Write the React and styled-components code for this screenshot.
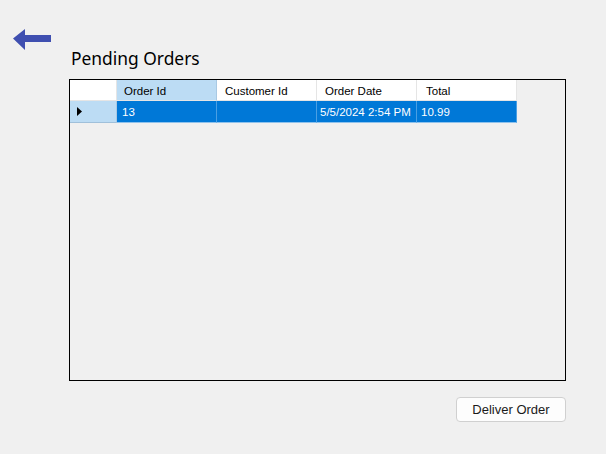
import React from "react";
import styled, { createGlobalStyle } from "styled-components";

const Global = createGlobalStyle`
  html, body { margin: 0; padding: 0; background: #f0f0f0; }
  body { width: 606px; height: 454px; overflow: hidden; font-family: "Liberation Sans", Arial, sans-serif; }
`;

const Page = styled.div`
  width: 606px;
  height: 454px;
  box-sizing: border-box;
  background: #f0f0f0;
  display: flex;
  flex-direction: column;
`;

const BackButton = styled.button`
  margin: 29px 0 0 13px;
  padding: 0;
  width: 38px;
  height: 21px;
  border: none;
  background: transparent;
  display: block;
  cursor: pointer;
  svg { display: block; }
`;

const Content = styled.div`
  margin-left: 69px;
  width: 497px;
  display: flex;
  flex-direction: column;
`;

const Title = styled.h1`
  margin: -4px 0 0 2px;
  height: 33px;
  font-family: "Noto Sans", sans-serif;
  font-weight: 400;
  font-size: 17.4px;
  line-height: 24px;
  color: #000;
`;

const Grid = styled.div`
  box-sizing: border-box;
  width: 497px;
  height: 302px;
  border: 1px solid #000;
  background: #f0f0f0;
  display: flex;
  flex-direction: column;
  font-family: "Liberation Sans", Arial, sans-serif;
  font-size: 11.5px;
`;

const Row = styled.div`
  display: flex;
  height: ${(p) => p.$h}px;
`;

const RowHeader = styled.div`
  box-sizing: border-box;
  width: 47px;
  height: 100%;
  background: ${(p) => (p.$selected ? "#bcdcf4" : "#ffffff")};
  border-right: 1px solid ${(p) => (p.$selected ? "#a9c9e3" : "#e5e5e5")};
  border-bottom: 1px solid ${(p) => (p.$selected ? "#a0c0da" : "#e5e5e5")};
  display: flex;
  align-items: center;
  padding-left: 7px;
`;

const HeaderCell = styled.div`
  box-sizing: border-box;
  width: 100px;
  height: 100%;
  background: ${(p) => (p.$active ? "#bcdcf4" : "#ffffff")};
  border-right: 1px solid ${(p) => (p.$active ? "#a9c9e3" : "#e5e5e5")};
  border-bottom: 1px solid #e5e5e5;
  color: #000;
  display: flex;
  align-items: center;
  padding: 1px 0 0 ${(p) => p.$pad}px;
  white-space: nowrap;
`;

const Cell = styled.div`
  box-sizing: border-box;
  width: 100px;
  height: 100%;
  background: #0078d7;
  border-right: 1px solid #4a9fe3;
  border-bottom: 1px solid #8fc2ec;
  color: #fff;
  display: flex;
  align-items: center;
  padding-left: ${(p) => p.$pad}px;
  white-space: nowrap;
`;

const Footer = styled.div`
  display: flex;
  justify-content: flex-end;
  margin-top: 16px;
`;

const Button = styled.button`
  box-sizing: border-box;
  width: 110px;
  height: 25px;
  background: #fdfdfd;
  border: 1px solid #d0d0d0;
  border-radius: 4px;
  font-family: "Liberation Sans", Arial, sans-serif;
  font-size: 13px;
  color: #1a1a1a;
  padding: 0;
  display: flex;
  align-items: center;
  justify-content: center;
`;

const columns = [
  { label: "Order Id", pad: 7, active: true },
  { label: "Customer Id", pad: 8 },
  { label: "Order Date", pad: 8 },
  { label: "Total", pad: 9 },
];

const data = ["13", "", "5/5/2024 2:54 PM", "10.99"];
const dataPad = [5, 5, 3, 4];

export default function App() {
  return (
    <>
      <Global />
      <Page>
        <BackButton aria-label="Back">
          <svg width="38" height="21" viewBox="0 0 38 21">
            <path d="M0 9.5 L12 0 L12 6 L38 6 L38 13 L12 13 L12 21 Z" fill="#3f4fb0" />
          </svg>
        </BackButton>
        <Content>
          <Title>Pending Orders</Title>
          <Grid>
            <Row $h={21}>
              <RowHeader />
              {columns.map((c) => (
                <HeaderCell key={c.label} $pad={c.pad} $active={c.active}>
                  {c.label}
                </HeaderCell>
              ))}
            </Row>
            <Row $h={22}>
              <RowHeader $selected>
                <svg width="5" height="9" viewBox="0 0 5 9">
                  <path d="M0 0 L5 4.5 L0 9 Z" fill="#000" />
                </svg>
              </RowHeader>
              {data.map((d, i) => (
                <Cell key={i} $pad={dataPad[i]}>{d}</Cell>
              ))}
            </Row>
          </Grid>
          <Footer>
            <Button>Deliver Order</Button>
          </Footer>
        </Content>
      </Page>
    </>
  );
}
